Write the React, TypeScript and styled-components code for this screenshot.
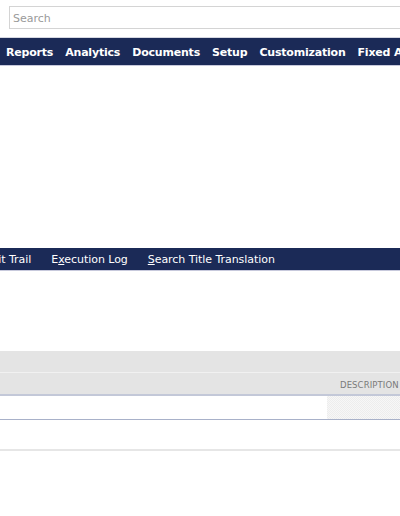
import React from "react";
import styled, { createGlobalStyle } from "styled-components";

const Global = createGlobalStyle`
  html, body { margin: 0; padding: 0; background: #ffffff; overflow: hidden; }
  body { font-family: "DejaVu Sans", Verdana, sans-serif; }
`;

const Page = styled.div`
  width: 400px;
  height: 516px;
  overflow: hidden;
  display: flex;
  flex-direction: column;
`;

const SearchBar = styled.div`
  height: 37px;
  padding: 6px 0 0 9px;
  box-sizing: border-box;
`;

const SearchInput = styled.input`
  width: 420px;
  height: 23px;
  box-sizing: border-box;
  border: 1px solid #d4d4d4;
  padding: 1px 3px 0;
  font-family: "DejaVu Sans", Verdana, sans-serif;
  font-size: 11px;
  color: #333;
  outline: none;
  &::placeholder { color: #9a9a9a; }
`;

const MainNav = styled.nav`
  height: 29px;
  background: #1b2a57;
  border-top: 1px solid #d6d8e2;
  border-bottom: 1px solid #c7c9dc;
  display: flex;
  align-items: center;
  gap: 12px;
  padding: 2px 0 0 6px;
  white-space: nowrap;
  box-sizing: border-box;
`;

const MainItem = styled.span`
  color: #ffffff;
  font-weight: bold;
  font-size: 11px;
  letter-spacing: -0.2px;
`;

const Spacer = styled.div<{ $h: number }>`
  height: ${(p) => p.$h}px;
  flex: none;
`;

const SubNav = styled.nav`
  height: 22px;
  background: #1b2a57;
  border-bottom: 1px solid #c7c9dc;
  display: flex;
  align-items: center;
  white-space: nowrap;
  box-sizing: content-box;
`;

const SubItem = styled.span<{ $first?: boolean }>`
  color: #ffffff;
  font-size: 11px;
  letter-spacing: -0.05px;
  padding: 0 10px;
  margin-left: ${(p) => (p.$first ? "-33px" : "0")};
  u { text-decoration: underline; text-underline-offset: 1px; }
`;

const Band = styled.div`
  height: 21px;
  background: #e4e4e4;
  border-bottom: 1px solid #f1f1f1;
`;

const HeaderRow = styled.div`
  height: 21px;
  background: #e4e4e4;
  border-bottom: 2px solid #c3c8d8;
  display: flex;
  align-items: center;
  justify-content: flex-end;
`;

const HeaderCell = styled.span`
  font-size: 8.5px;
  color: #7a7a7a;
  letter-spacing: 0.1px;
  width: 60px;
  white-space: nowrap;
  padding-top: 3px;
`;

const DataRow = styled.div`
  height: 23px;
  display: grid;
  grid-template-columns: 327px 1fr;
  border-bottom: 1px solid #a8b1c9;
`;

const Cell = styled.div<{ $hatched?: boolean }>`
  background-color: ${(p) => (p.$hatched ? "#f7f7f7" : "#ffffff")};
  background-image: ${(p) =>
    p.$hatched
      ? "linear-gradient(45deg, #ededed 25%, transparent 25%, transparent 75%, #ededed 75%), linear-gradient(45deg, #ededed 25%, transparent 25%, transparent 75%, #ededed 75%)"
      : "none"};
  background-size: 2px 2px;
  background-position: 0 0, 1px 1px;
`;

const Footer = styled.div`
  height: 2px;
  background: #e6e6e6;
  margin-top: 29px;
`;

export default function App() {
  return (
    <Page>
      <Global />
      <SearchBar>
        <SearchInput placeholder="Search" />
      </SearchBar>
      <MainNav>
        <MainItem>Reports</MainItem>
        <MainItem>Analytics</MainItem>
        <MainItem>Documents</MainItem>
        <MainItem>Setup</MainItem>
        <MainItem>Customization</MainItem>
        <MainItem>Fixed Assets</MainItem>
      </MainNav>
      <Spacer $h={182} />
      <SubNav>
        <SubItem $first>Audit Trail</SubItem>
        <SubItem>
          E<u>x</u>ecution Log
        </SubItem>
        <SubItem>
          <u>S</u>earch Title Translation
        </SubItem>
      </SubNav>
      <Spacer $h={80} />
      <Band />
      <HeaderRow>
        <HeaderCell>DESCRIPTION</HeaderCell>
      </HeaderRow>
      <DataRow>
        <Cell />
        <Cell $hatched />
      </DataRow>
      <Footer />
    </Page>
  );
}
